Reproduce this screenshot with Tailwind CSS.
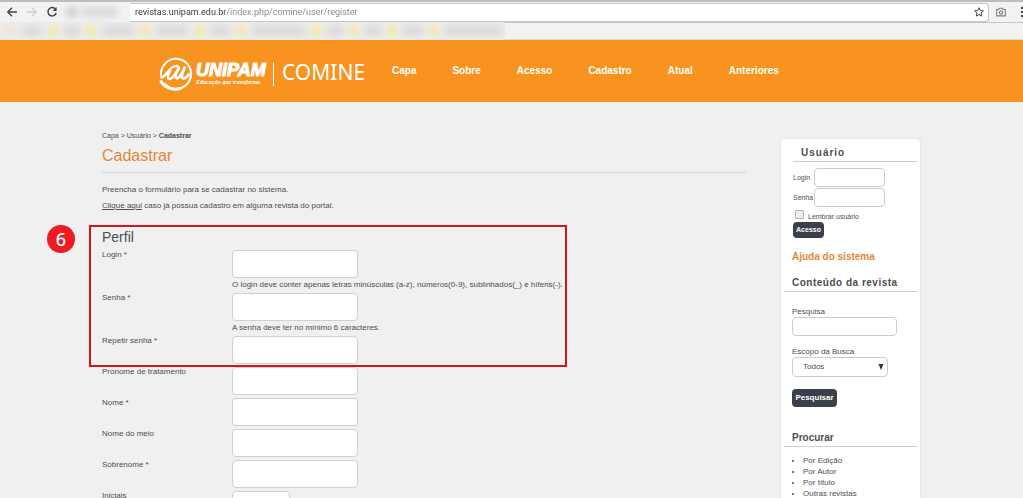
<!DOCTYPE html>
<html lang="pt-BR">
<head>
<meta charset="utf-8">
<title>COMINE - Cadastrar</title>
<script src="https://cdn.jsdelivr.net/npm/@tailwindcss/browser@4"></script>
</head>
<body class="h-screen overflow-x-hidden [scrollbar-width:none] bg-[#f0f0f0] font-['Liberation_Sans',Arial,sans-serif] text-[8px] leading-3 text-[#4e4e4e]">

<!-- Browser toolbar -->
<div class="h-10 overflow-hidden border-t-2 border-[#bdbdc0] bg-[#f2f2f2]">
  <div class="flex h-5 items-center">
    <div class="flex w-[130px] shrink-0 items-center gap-2 pl-1.5">
      <button aria-label="Voltar" class="size-3"><svg viewBox="0 0 12 12" class="size-3 fill-none stroke-[#444]" stroke-width="1.4"><path d="M11 6H2M6 1.8 1.8 6 6 10.2"/></svg></button>
      <button aria-label="Avançar" class="size-3"><svg viewBox="0 0 12 12" class="size-3 fill-none stroke-[#cfcfcf]" stroke-width="1.4"><path d="M1 6h9M6 1.8 10.2 6 6 10.2"/></svg></button>
      <button aria-label="Recarregar" class="size-3"><svg viewBox="0 0 12 12" class="size-3 fill-none stroke-[#444]" stroke-width="1.5"><path d="M9.6 3.3A4.2 4.2 0 1 0 10.2 7"/><path d="M10.6 1v4H6.6z" class="fill-[#444] stroke-none"/></svg></button>
      <span class="flex gap-1 blur-[3px]"><span class="h-2.5 w-3 bg-[#d2d2d2]"></span><span class="h-2.5 w-9 bg-[#dadada]"></span></span>
    </div>
    <div class="flex h-[19px] min-w-0 flex-1 items-center rounded-r-sm border border-l-0 border-[#c6c6c9] bg-white pl-[5px]">
      <input aria-label="Endereço" value="revistas.unipam.edu.br/index.php/comine/user/register" class="h-4 min-w-0 flex-1 bg-[linear-gradient(to_right,#333333_90px,#858585_90px)] bg-clip-text font-[Roboto,sans-serif] text-[9px] text-transparent">
      <button aria-label="Favoritar" class="mr-1 size-2.5"><svg viewBox="0 0 12 12" class="size-2.5 fill-none stroke-[#444]" stroke-width="1.2"><path d="m6 .9 1.5 3.4 3.7.4-2.8 2.5.8 3.7L6 9l-3.2 1.9.8-3.7L.8 4.7l3.7-.4z"/></svg></button>
    </div>
    <div class="flex w-[34px] shrink-0 items-center justify-between pl-[7px]">
      <button aria-label="Captura" class="size-2.5"><svg viewBox="0 0 12 12" class="size-2.5 fill-none stroke-[#808080]" stroke-width="1.3"><path d="M.8 3h2.4l1-1.6h3.6l1 1.6h2.4v7.6H.8z"/><circle cx="6" cy="6.6" r="2"/></svg></button>
      <button aria-label="Menu" class="h-2.5 w-0.5"><svg viewBox="0 0 2 10" class="h-2.5 w-0.5 fill-[#444]"><path d="M0 0h2v2H0zM0 4h2v2H0zM0 8h2v2H0z"/></svg></button>
    </div>
  </div>
  <div class="flex h-[18px] items-stretch">
    <div class="flex w-[505px] items-center overflow-hidden bg-[#ececec] pl-2">
      <div class="flex h-3 flex-1 items-center gap-1.5 pr-1 blur-[3px]">
        <i class="size-2 bg-[#f5e0d2]"></i><i class="h-2.5 w-5 bg-[#dadada]"></i>
        <i class="size-2.5 bg-[#f8e6a8]"></i><i class="h-2.5 w-4 bg-[#dadada]"></i>
        <i class="size-2.5 bg-[#f8e6a8]"></i><i class="h-2.5 w-8 bg-[#dadada]"></i>
        <i class="size-2.5 bg-[#f8e6a8]"></i><i class="h-2.5 w-8 bg-[#dadada]"></i>
        <i class="size-2.5 bg-[#f8e6a8]"></i><i class="h-2.5 w-5 bg-[#dadada]"></i>
        <i class="size-2.5 bg-[#f8e6a8]"></i><i class="h-2.5 flex-1 bg-[#dadada]"></i>
        <i class="size-2.5 bg-[#f8e6a8]"></i><i class="h-2.5 w-4 bg-[#dadada]"></i>
        <i class="size-2.5 bg-[#f8e6a8]"></i><i class="h-2.5 w-4 bg-[#dadada]"></i>
        <i class="size-2.5 bg-[#f8e6a8]"></i><i class="h-2.5 w-5 bg-[#dadada]"></i>
        <i class="size-2.5 bg-[#f8e6a8]"></i><i class="h-2.5 w-14 bg-[#dadada]"></i>
      </div>
    </div>
    <div class="flex-1 border-y border-[#dcdcdc] border-t-[#c6c6c9]"></div>
  </div>
</div>

<!-- Site header -->
<header class="h-[62px] bg-[#f7931e]">
  <div class="mx-auto flex h-full max-w-[819px] items-center pl-[57px] text-white">
    <a href="#" class="flex w-[233px] shrink-0 items-center pt-1.5">
      <svg viewBox="0 0 34 34" class="size-[34px] shrink-0 fill-none stroke-white" stroke-linecap="round" stroke-linejoin="round" aria-hidden="true">
        <path d="M2.300 19.500A15 15 0 1 1 6 27" stroke-width="2"/>
        <path d="M2 24.500C6 31 14 33.500 21 31.500" stroke-width="3"/>
        <path d="M2.300 20.500C7 20 8.500 12 15 9.500c2.500-1 4.500-.6 4.500 1.200C19 14 13.500 22 10.500 22c-3 0-1.500-5 .8-8" stroke-width="2.400"/>
        <path d="M20 11c-2.500 4-4.500 8-3 9.800 2 2 6-3.300 8.700-10.300-2.200 5-3.700 9.300-2.200 10.500 1.500 1 4-.6 6.500-3.500" stroke-width="2.800"/>
      </svg>
      <span class="flex w-[72px] flex-col pl-[3px]">
        <span class="text-[18px] font-bold italic leading-[17px] [-webkit-text-stroke:1px_white]">UNIPAM</span>
        <span class="whitespace-nowrap font-['Liberation_Serif',serif] text-[6px] font-bold italic leading-[7px]">Educação que transforma</span>
      </span>
      <span class="ml-2 h-6 w-px bg-white"></span>
      <span class="pb-1 pl-2 font-['Noto_Sans','Open_Sans',sans-serif] text-[21px] font-normal leading-6">COMINE</span>
    </a>
    <nav class="flex gap-9 text-[10px] font-bold">
      <a href="#">Capa</a><a href="#">Sobre</a><a href="#">Acesso</a><a href="#">Cadastro</a><a href="#">Atual</a><a href="#">Anteriores</a>
    </nav>
  </div>
</header>

<div class="mx-auto flex max-w-[819px] items-start gap-[34px]">
  <main class="min-w-0 flex-1 pt-7">
    <nav aria-label="Trilha" class="text-[7px]"><a href="#">Capa</a> &gt; <a href="#">Usuário</a> &gt; <a href="#" class="font-bold">Cadastrar</a></nav>
    <h1 class="border-b border-[#d6d6d6] pb-1.5 pt-1 text-[16px] leading-5 text-[#e2873a]">Cadastrar</h1>
    <p class="pt-[11px]">Preencha o formulário para se cadastrar no sistema.</p>
    <p class="pt-1"><a href="#" class="underline">Clique aqui</a> caso já possua cadastro em alguma revista do portal.</p>

    <form class="relative pt-[17px]">
      <div class="pointer-events-none absolute -left-[13px] top-[13px] h-[142px] w-[478px] border-2 border-[#d4151b]"></div>
      <div class="absolute -left-[55px] top-[13px] flex size-7 items-center justify-center rounded-full bg-[#ee1c22] font-['Noto_Sans','Open_Sans',sans-serif] text-[18px] font-medium text-white">6</div>
      <h2 class="pb-[5px] text-[14px] leading-4">Perfil</h2>
      <div class="grid grid-cols-[130px_1fr] gap-y-[3px] [&>label]:leading-[10px]">
        <label for="login">Login *</label>
        <div><input id="login" class="block h-7 w-[126px] rounded-sm border border-[#d0d0d0] bg-white px-2"><p class="pt-0.5 leading-[10px]">O login deve conter apenas letras minúsculas (a-z), números(0-9), sublinhados(_) e hífens(-).</p></div>
        <label for="senha">Senha *</label>
        <div><input id="senha" type="password" class="block h-7 w-[126px] rounded-sm border border-[#d0d0d0] bg-white px-2"><p class="pt-0.5 leading-[10px]">A senha deve ter no mínimo 6 caracteres.</p></div>
        <label for="senha2">Repetir senha *</label>
        <input id="senha2" type="password" class="block h-7 w-[126px] rounded-sm border border-[#d0d0d0] bg-white px-2">
        <label for="pronome">Pronome de tratamento</label>
        <input id="pronome" class="block h-7 w-[126px] rounded-sm border border-[#d0d0d0] bg-white px-2">
        <label for="nome">Nome *</label>
        <input id="nome" class="block h-7 w-[126px] rounded-sm border border-[#d0d0d0] bg-white px-2">
        <label for="meio">Nome do meio</label>
        <input id="meio" class="block h-7 w-[126px] rounded-sm border border-[#d0d0d0] bg-white px-2">
        <label for="sobrenome">Sobrenome *</label>
        <input id="sobrenome" class="block h-7 w-[126px] rounded-sm border border-[#d0d0d0] bg-white px-2">
        <label for="iniciais">Iniciais</label>
        <input id="iniciais" class="block h-7 w-[58px] rounded-sm border border-[#d0d0d0] bg-white px-2">
      </div>
    </form>
  </main>

  <aside class="mt-9 w-[141px] shrink-0 rounded-sm border border-[#e6e6e6] bg-white pb-6 pl-[11px] pr-[3px] pt-2">
    <h2 class="ml-px border-b border-[#cfcfcf] pb-0.5 pl-2 text-[10px] font-bold tracking-widest">Usuário</h2>
    <form class="pl-px pt-1.5 text-[7px]">
      <div class="flex flex-col gap-px">
        <div class="flex items-center"><label for="ulogin" class="w-[21px]">Login</label><input id="ulogin" class="h-[19px] w-[71px] rounded-sm border border-[#cccccc] px-1"></div>
        <div class="flex items-center"><label for="usenha" class="w-[21px]">Senha</label><input id="usenha" type="password" class="h-[19px] w-[71px] rounded-sm border border-[#cccccc] px-1"></div>
      </div>
      <div class="flex items-start gap-1 pl-0.5 pt-[3px]"><input id="lembrar" type="checkbox" class="size-[9px] appearance-none rounded-[1px] border border-[#b5b5b5] bg-[#eeeeee]"><label for="lembrar" class="pt-px leading-[11px]">Lembrar usuário</label></div>
      <button type="button" class="block h-4 w-[31px] rounded-sm bg-[#3b3f49] text-[7px] font-bold text-white">Acesso</button>
    </form>
    <h2 class="pt-[13px] text-[10px] font-bold text-[#e2873a]"><a href="#">Ajuda do sistema</a></h2>
    <h2 class="-ml-2 mt-[14px] border-b border-[#cfcfcf] pb-0.5 pl-2 text-[10px] font-bold tracking-wider">Conteúdo da revista</h2>
    <form class="pt-[14px]">
      <label for="pesquisa" class="block leading-[11px]">Pesquisa</label>
      <input id="pesquisa" class="block h-[19px] w-[105px] rounded-sm border border-[#cccccc] px-1">
      <label for="escopo" class="mt-[11px] block leading-[10px]">Escopo da Busca</label>
      <div class="relative w-24">
        <select id="escopo" class="block h-5 w-full appearance-none rounded-sm border border-[#cccccc] bg-white pl-2.5 text-[8px]"><option>Todos</option></select>
        <svg viewBox="0 0 6 6" class="pointer-events-none absolute right-1 top-[7px] size-1.5 fill-[#333]" aria-hidden="true"><path d="M.5 0h5L3 6z"/></svg>
      </div>
      <button type="button" class="mt-3 block h-[18px] w-[45px] rounded-sm bg-[#3b3f49] font-bold text-white">Pesquisar</button>
    </form>
    <h2 class="-ml-2 mt-[25px] border-b border-[#cfcfcf] pb-0.5 pl-2 text-[10px] font-bold">Procurar</h2>
    <ul class="list-disc pl-[11px] pt-2 leading-[11px]">
      <li><a href="#">Por Edição</a></li><li><a href="#">Por Autor</a></li><li><a href="#">Por título</a></li><li><a href="#">Outras revistas</a></li>
    </ul>
  </aside>
</div>
</body>
</html>
